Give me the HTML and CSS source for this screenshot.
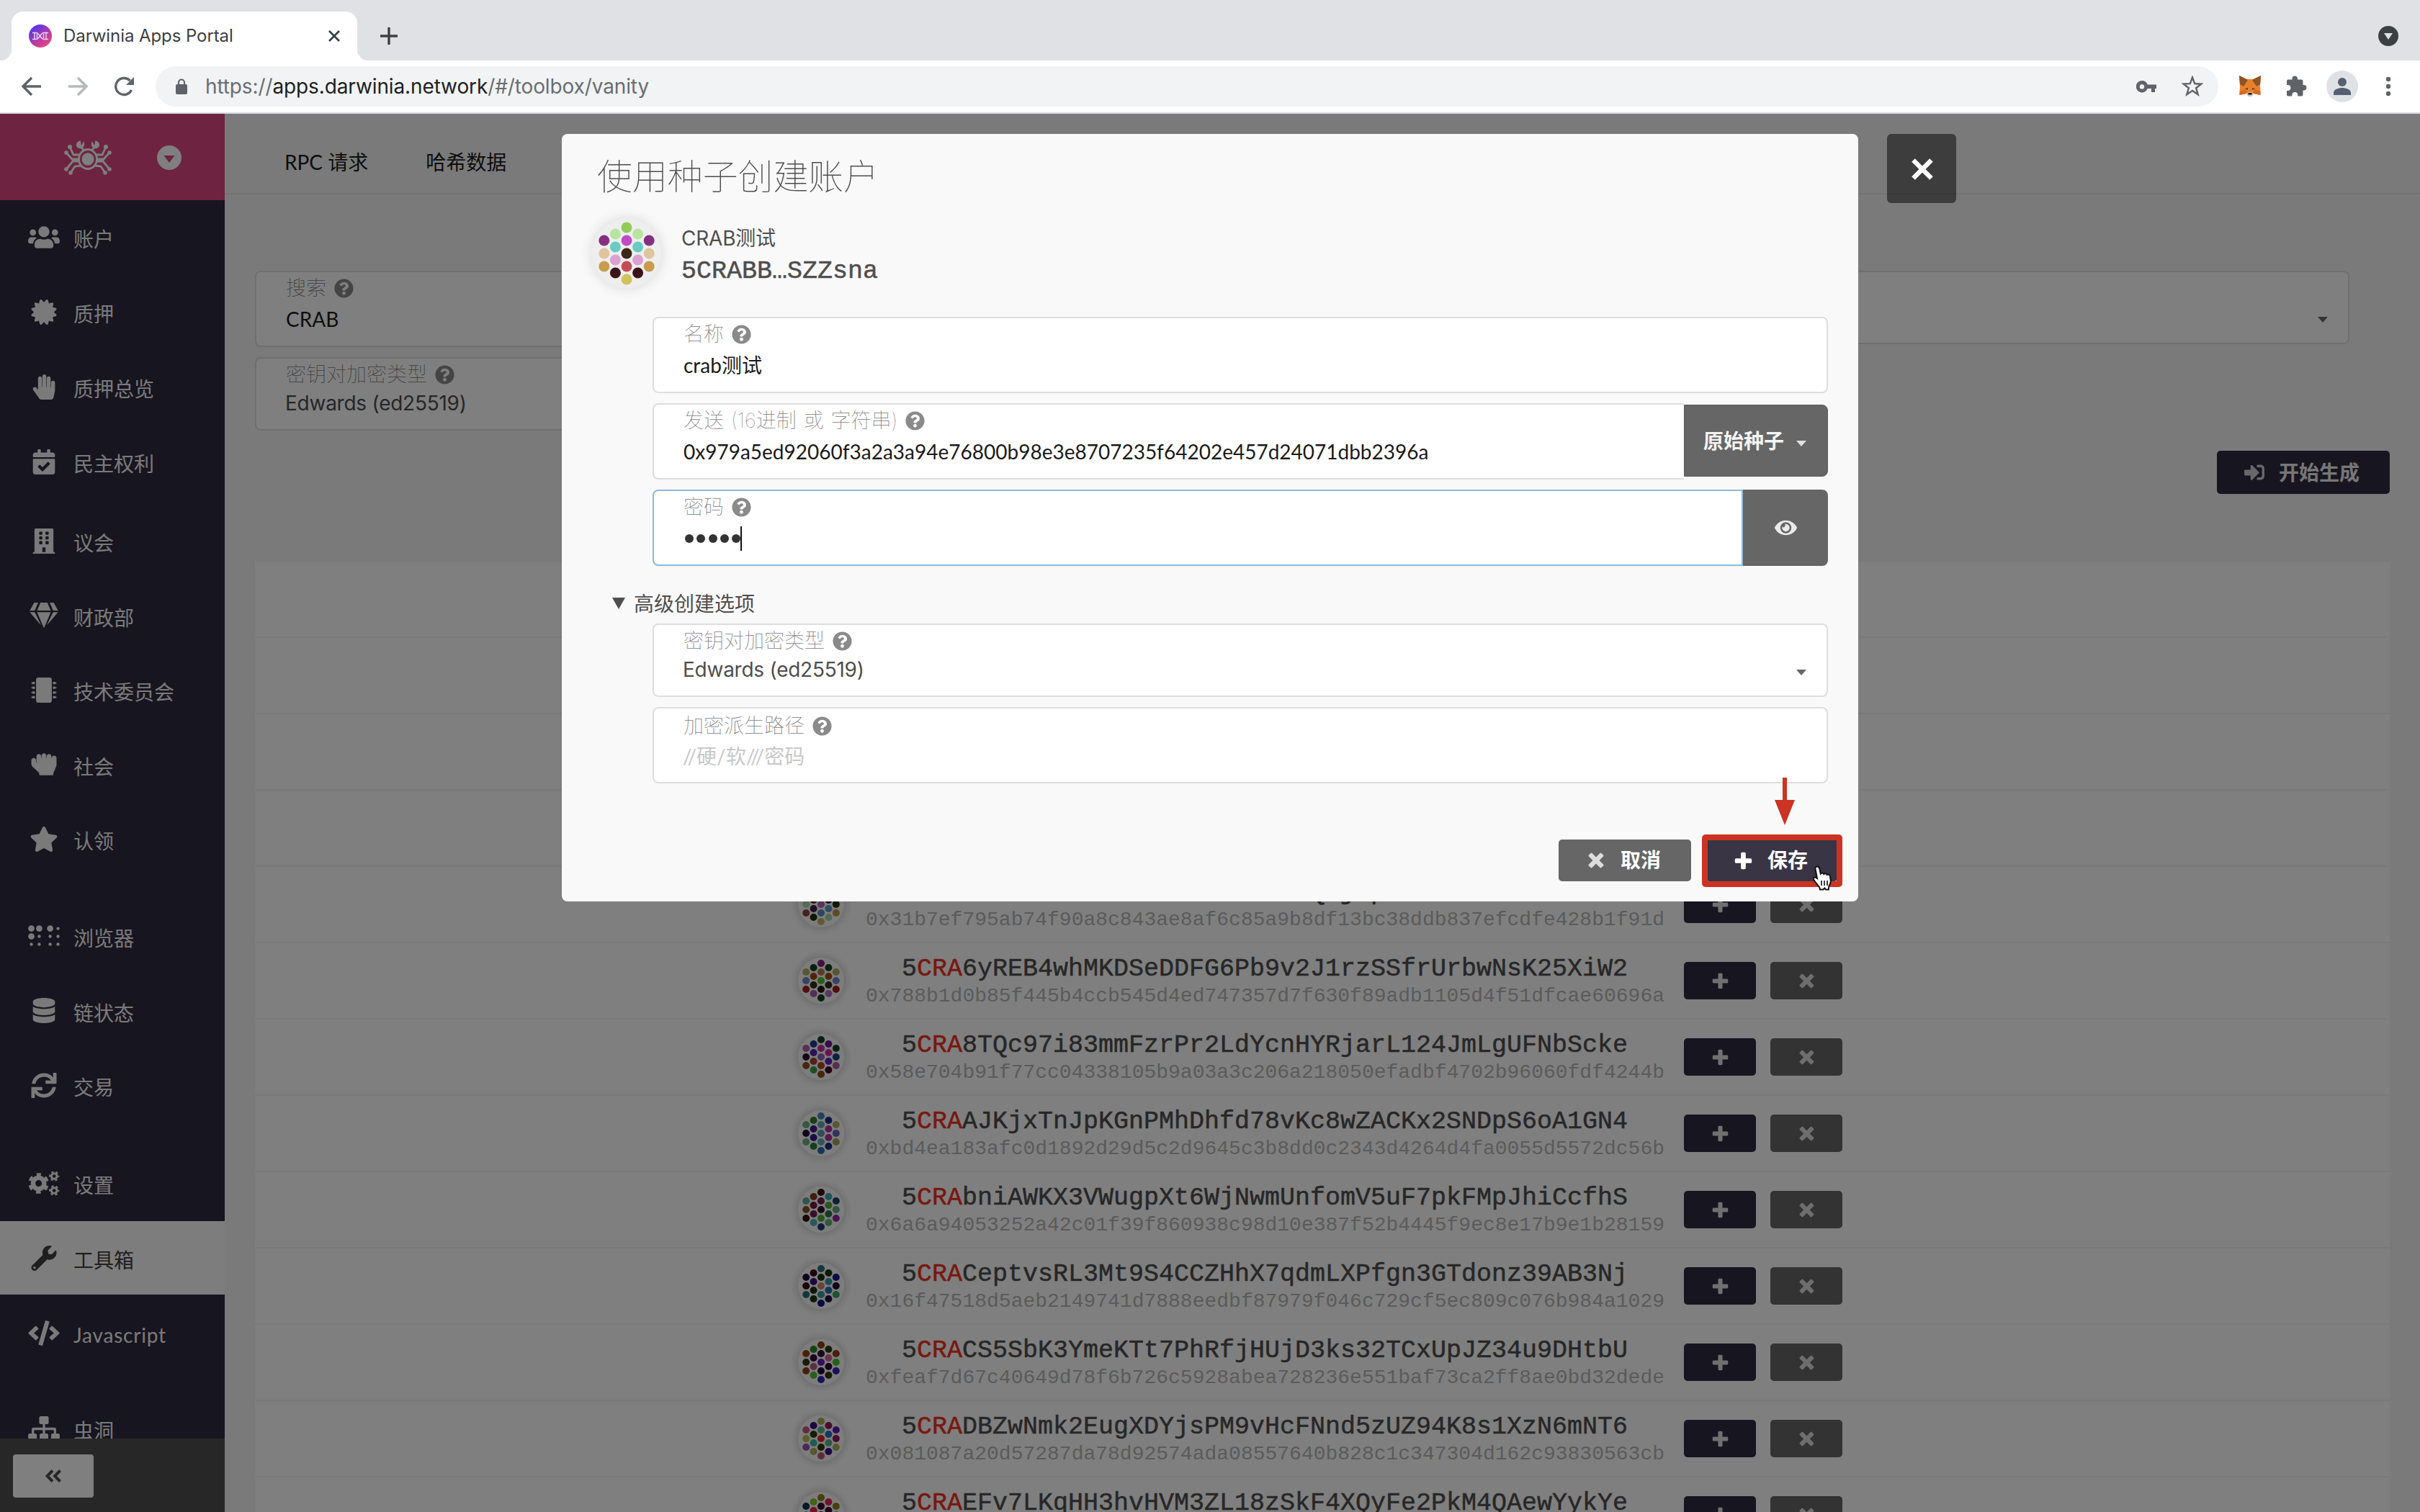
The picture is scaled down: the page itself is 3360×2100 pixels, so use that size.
FILE: index.html
```html
<!DOCTYPE html>
<html lang="zh-CN">
<head>
<meta charset="utf-8">
<title>Darwinia Apps Portal</title>
<link rel="stylesheet" href="styles.css">
</head>
<body>
<svg class="sprite" aria-hidden="true">
  <symbol id="i-users" viewBox="0 0 640 512"><path d="M96 224c35.300 0 64-28.700 64-64s-28.700-64-64-64-64 28.700-64 64 28.700 64 64 64zm448 0c35.300 0 64-28.700 64-64s-28.700-64-64-64-64 28.700-64 64 28.700 64 64 64zm32 32h-64c-17.600 0-33.500 7.100-45.100 18.600 40.300 22.100 68.900 62 75.100 109.400h66c17.700 0 32-14.300 32-32v-32c0-35.300-28.700-64-64-64zm-256 0c61.900 0 112-50.100 112-112S381.900 32 320 32 208 82.100 208 144s50.100 112 112 112zm76.800 32h-8.300c-20.800 10-43.900 16-68.500 16s-47.600-6-68.500-16h-8.300C179.600 288 128 339.600 128 403.200V432c0 26.500 21.500 48 48 48h288c26.500 0 48-21.500 48-48v-28.800c0-63.600-51.600-115.200-115.200-115.200zm-223.700-13.400C161.500 263.100 145.600 256 128 256H64c-35.300 0-64 28.700-64 64v32c0 17.700 14.300 32 32 32h65.900c6.300-47.400 34.900-87.300 75.200-109.400z"/></symbol>
  <symbol id="i-certificate" viewBox="0 0 512 512"><path d="M458.622 255.920l45.985-45.005c13.708-12.977 7.316-36.039-10.664-40.339l-62.650-15.990 17.661-62.015c4.991-17.838-11.829-34.663-29.661-29.671l-61.994 17.667-15.984-62.671C337.085.197 313.765-6.276 300.990 7.228L256 53.570 211.011 7.229c-12.630-13.351-36.047-7.234-40.325 10.668l-15.984 62.671-61.995-17.667C74.870 57.907 58.056 74.738 63.046 92.572l17.661 62.015-62.650 15.990C.069 174.878-6.310 197.944 7.392 210.915l45.985 45.005-45.985 45.004c-13.708 12.977-7.316 36.039 10.664 40.339l62.650 15.990-17.661 62.015c-4.991 17.838 11.829 34.663 29.661 29.671l61.994-17.667 15.984 62.671c4.439 18.575 27.696 24.018 40.325 10.668L256 458.610l44.989 46.001c12.500 13.488 35.987 7.486 40.325-10.668l15.984-62.671 61.994 17.667c17.836 4.994 34.651-11.837 29.661-29.671l-17.661-62.015 62.650-15.990c17.987-4.302 24.366-27.367 10.664-40.339l-45.984-45.004z"/></symbol>
  <symbol id="i-hand" viewBox="0 0 448 512"><path d="M408.781 128.007C386.356 127.578 368 146.360 368 168.790V256h-8V79.790c0-22.430-18.356-41.212-40.781-40.783C297.488 39.423 280 57.169 280 79v177h-8V40.790C272 18.360 253.644-.422 231.219.007 209.488.423 192 18.169 192 40v216h-8V80.790c0-22.430-18.356-41.212-40.781-40.783C121.488 40.423 104 58.169 104 80v235.992l-31.648-43.519c-12.993-17.866-38.009-21.817-55.877-8.823-17.865 12.994-21.815 38.010-8.822 55.877l125.601 172.705A48 48 0 0 0 172.073 512h197.590c22.274 0 41.622-15.324 46.724-37.006l26.508-112.660a192.011 192.011 0 0 0 5.104-43.975V168c.001-21.831-17.487-39.577-39.218-39.993z"/></symbol>
  <symbol id="i-calendar" viewBox="0 0 448 512"><path d="M436 160H12c-6.627 0-12-5.373-12-12v-36c0-26.510 21.490-48 48-48h48V12c0-6.627 5.373-12 12-12h40c6.627 0 12 5.373 12 12v52h128V12c0-6.627 5.373-12 12-12h40c6.627 0 12 5.373 12 12v52h48c26.510 0 48 21.490 48 48v36c0 6.627-5.373 12-12 12zM12 192h424c6.627 0 12 5.373 12 12v260c0 26.510-21.490 48-48 48H48c-26.510 0-48-21.490-48-48V204c0-6.627 5.373-12 12-12zm333.296 95.947l-28.169-28.398c-4.667-4.705-12.265-4.736-16.970-.068L194.120 364.665l-45.980-46.352c-4.667-4.705-12.266-4.736-16.971-.068l-28.397 28.170c-4.705 4.667-4.736 12.265-.068 16.970l82.601 83.269c4.667 4.705 12.265 4.736 16.970.068l142.953-141.805c4.705-4.667 4.736-12.265.068-16.970z"/></symbol>
  <symbol id="i-building" viewBox="0 0 448 512"><path d="M436 480h-20V24c0-13.255-10.745-24-24-24H56C42.745 0 32 10.745 32 24v456H12c-6.627 0-12 5.373-12 12v20h448v-20c0-6.627-5.373-12-12-12zM128 76c0-6.627 5.373-12 12-12h40c6.627 0 12 5.373 12 12v40c0 6.627-5.373 12-12 12h-40c-6.627 0-12-5.373-12-12V76zm0 96c0-6.627 5.373-12 12-12h40c6.627 0 12 5.373 12 12v40c0 6.627-5.373 12-12 12h-40c-6.627 0-12-5.373-12-12v-40zm52 148h-40c-6.627 0-12-5.373-12-12v-40c0-6.627 5.373-12 12-12h40c6.627 0 12 5.373 12 12v40c0 6.627-5.373 12-12 12zm76 160h-64v-84c0-6.627 5.373-12 12-12h40c6.627 0 12 5.373 12 12v84zm64-172c0 6.627-5.373 12-12 12h-40c-6.627 0-12-5.373-12-12v-40c0-6.627 5.373-12 12-12h40c6.627 0 12 5.373 12 12v40zm0-96c0 6.627-5.373 12-12 12h-40c-6.627 0-12-5.373-12-12v-40c0-6.627 5.373-12 12-12h40c6.627 0 12 5.373 12 12v40zm0-96c0 6.627-5.373 12-12 12h-40c-6.627 0-12-5.373-12-12V76c0-6.627 5.373-12 12-12h40c6.627 0 12 5.373 12 12v40z"/></symbol>
  <symbol id="i-gem" viewBox="0 0 576 512"><path d="M485.500 0L576 160H474.900L405.700 0h79.800zm-128 0l69.200 160H149.300L218.500 0h139zm-267 0h79.800l-69.200 160H0L90.500 0zM0 192h100.700l123 251.700c1.500 3.100-2.700 5.900-5 3.300L0 192zm148.200 0h279.600l-137 318.200c-1 2.400-4.500 2.400-5.500 0L148.200 192zm204.100 251.700l123-251.700H576L357.300 446.900c-2.300 2.700-6.500-.1-5-3.200z"/></symbol>
  <symbol id="i-chip" viewBox="0 0 512 512"><rect x="96" y="0" width="320" height="512" rx="48"/><path d="M440 88h42q6 0 6 6v6h18q6 0 6 6v12q0 6-6 6h-18v6q0 6-6 6h-42zm0 96h42q6 0 6 6v6h18q6 0 6 6v12q0 6-6 6h-18v6q0 6-6 6h-42zm0 96h42q6 0 6 6v6h18q6 0 6 6v12q0 6-6 6h-18v6q0 6-6 6h-42zm0 96h42q6 0 6 6v6h18q6 0 6 6v12q0 6-6 6h-18v6q0 6-6 6h-42zM72 88H30q-6 0-6 6v6H6q-6 0-6 6v12q0 6 6 6h18v6q0 6 6 6h42zm0 96H30q-6 0-6 6v6H6q-6 0-6 6v12q0 6 6 6h18v6q0 6 6 6h42zm0 96H30q-6 0-6 6v6H6q-6 0-6 6v12q0 6 6 6h18v6q0 6 6 6h42zm0 96H30q-6 0-6 6v6H6q-6 0-6 6v12q0 6 6 6h18v6q0 6 6 6h42z"/></symbol>
  <symbol id="i-fist" viewBox="0 0 512 512"><path d="M464.800 80c-26.900-.4-48.800 21.200-48.800 48h-8V96.800c0-26.300-20.900-48.300-47.200-48.800-26.900-.4-48.800 21.200-48.800 48v32h-8V80.800c0-26.300-20.900-48.300-47.200-48.800-26.900-.4-48.800 21.200-48.800 48v48h-8V96.800c0-26.300-20.900-48.300-47.200-48.800-26.900-.4-48.800 21.200-48.800 48v136l-8-7.100v-48.100c0-26.300-20.900-48.300-47.200-48.800C21.900 127.600 0 149.200 0 176v66.400c0 27.400 11.700 53.500 32.200 71.700l111.700 99.300c10.200 9.100 16.100 22.200 16.100 35.900v6.700c0 13.300 10.700 24 24 24h240c13.300 0 24-10.700 24-24v-2.900c0-12.800 2.600-25.500 7.500-37.300l49-116.300c5-11.800 7.500-24.500 7.500-37.300V128.800c0-26.300-20.900-48.400-47.200-48.800z"/></symbol>
  <symbol id="i-star" viewBox="0 0 576 512"><path d="M259.300 17.800L194 150.200 47.900 171.500c-26.200 3.800-36.700 36.100-17.700 54.600l105.700 103-25 145.500c-4.500 26.300 23.200 46 46.400 33.700L288 439.600l130.700 68.700c23.200 12.200 50.900-7.400 46.400-33.700l-25-145.500 105.700-103c19-18.500 8.500-50.800-17.700-54.600L382 150.200 316.700 17.800c-11.700-23.600-45.600-23.900-57.400 0z"/></symbol>
  <symbol id="i-braille" viewBox="0 0 640 512"><circle cx="64" cy="96" r="64"/><circle cx="224" cy="96" r="64"/><circle cx="446" cy="96" r="64"/><circle cx="606" cy="96" r="32"/><circle cx="64" cy="256" r="64"/><circle cx="224" cy="256" r="32"/><circle cx="446" cy="256" r="32"/><circle cx="606" cy="256" r="32"/><circle cx="64" cy="416" r="32"/><circle cx="224" cy="416" r="32"/><circle cx="446" cy="416" r="32"/><circle cx="606" cy="416" r="32"/></symbol>
  <symbol id="i-database" viewBox="0 0 448 512"><path d="M448 73.143v45.714C448 159.143 347.667 192 224 192S0 159.143 0 118.857V73.143C0 32.857 100.333 0 224 0s224 32.857 224 73.143zM448 176v102.857C448 319.143 347.667 352 224 352S0 319.143 0 278.857V176c48.125 33.143 136.208 48.572 224 48.572S399.874 209.143 448 176zm0 160v102.857C448 479.143 347.667 512 224 512S0 479.143 0 438.857V336c48.125 33.143 136.208 48.572 224 48.572S399.874 369.143 448 336z"/></symbol>
  <symbol id="i-sync" viewBox="0 0 512 512"><path d="M440.650 12.570l4 82.770A247.160 247.160 0 0 0 255.830 8C134.730 8 33.910 94.920 12.290 209.820A12 12 0 0 0 24.090 224h49.050a12 12 0 0 0 11.670-9.260 175.910 175.910 0 0 1 317-56.940l-101.460-4.860a12 12 0 0 0-12.570 12v47.410a12 12 0 0 0 12 12H500a12 12 0 0 0 12-12V12a12 12 0 0 0-12-12h-47.370a12 12 0 0 0-11.980 12.570zM255.830 432a175.610 175.610 0 0 1-146-77.800l101.800 4.870a12 12 0 0 0 12.570-12v-47.400a12 12 0 0 0-12-12H12a12 12 0 0 0-12 12V500a12 12 0 0 0 12 12h47.350a12 12 0 0 0 12-12.600l-4.150-82.570A247.170 247.170 0 0 0 255.830 504c121.110 0 221.930-86.920 243.550-201.820a12 12 0 0 0-11.800-14.180h-49.050a12 12 0 0 0-11.670 9.260A175.860 175.860 0 0 1 255.830 432z"/></symbol>
  <symbol id="i-cogs" viewBox="0 0 640 512"><g fill="none" stroke="currentColor"><circle cx="212" cy="256" r="113" stroke-width="94"/><circle cx="212" cy="256" r="182" stroke-width="56" stroke-dasharray="95.300 95.300" stroke-dashoffset="47.600" transform="rotate(-90 212 256)"/><circle cx="528" cy="110" r="56" stroke-width="44"/><circle cx="528" cy="110" r="90" stroke-width="30" stroke-dasharray="47.120 47.120" stroke-dashoffset="23.500"/><circle cx="528" cy="402" r="56" stroke-width="44"/><circle cx="528" cy="402" r="90" stroke-width="30" stroke-dasharray="47.120 47.120" stroke-dashoffset="23.500"/></g></symbol>
  <symbol id="i-wrench" viewBox="0 0 512 512"><path d="M507.730 109.100c-2.240-9.030-13.540-12.090-20.120-5.510l-74.360 74.360-67.880-11.310-11.310-67.880 74.360-74.360c6.620-6.620 3.430-17.900-5.660-20.160-47.380-11.740-99.550.910-136.580 37.930-39.640 39.640-50.550 97.100-34.050 147.200L18.740 402.760c-24.990 24.990-24.990 65.510 0 90.500 24.990 24.990 65.510 24.990 90.500 0l213.210-213.210c50.120 16.710 107.470 5.680 147.370-34.220 37.070-37.070 49.700-89.320 37.910-136.730zM64 472c-13.250 0-24-10.750-24-24 0-13.260 10.750-24 24-24s24 10.740 24 24c0 13.250-10.750 24-24 24z"/></symbol>
  <symbol id="i-code" viewBox="0 0 640 512"><path d="M278.900 511.500l-61-17.700c-6.400-1.800-10-8.500-8.200-14.900L346.200 8.700c1.800-6.400 8.500-10 14.900-8.200l61 17.700c6.400 1.800 10 8.500 8.200 14.900L293.800 503.300c-1.900 6.400-8.500 10.100-14.900 8.200zm-114-112.200l43.500-46.400c4.600-4.900 4.300-12.700-.8-17.200L117 256l90.600-79.700c5.100-4.500 5.500-12.300.8-17.200l-43.500-46.400c-4.500-4.800-12.100-5.100-17-.5L3.800 247.200c-5.100 4.700-5.100 12.800 0 17.500l144.100 135.100c4.900 4.600 12.500 4.400 17-.5zm327.200.6l144.100-135.100c5.100-4.700 5.100-12.800 0-17.500L492.100 112.100c-4.800-4.500-12.400-4.300-17 .5L431.600 159c-4.600 4.900-4.300 12.700.8 17.200L523 256l-90.600 79.700c-5.100 4.500-5.500 12.300-.8 17.200l43.500 46.400c4.500 4.900 12.100 5.100 17 .6z"/></symbol>
  <symbol id="i-sitemap" viewBox="0 0 640 512"><rect x="224" y="0" width="192" height="160" rx="30"/><rect x="0" y="352" width="176" height="160" rx="30"/><rect x="232" y="352" width="176" height="160" rx="30"/><rect x="464" y="352" width="176" height="160" rx="30"/><path d="M296 150h48v82h188q36 0 36 36v90h-48v-78H344v78h-48v-78H120v78H72v-90q0-36 36-36h188z"/></symbol>
  <symbol id="i-signin" viewBox="0 0 512 512"><path d="M416 448h-84c-6.600 0-12-5.400-12-12v-40c0-6.600 5.400-12 12-12h84c17.700 0 32-14.300 32-32V160c0-17.700-14.300-32-32-32h-84c-6.600 0-12-5.400-12-12V76c0-6.600 5.400-12 12-12h84c53 0 96 43 96 96v192c0 53-43 96-96 96zm-47-201L201 79c-15-15-41-4.500-41 17v96H24c-13.300 0-24 10.700-24 24v96c0 13.300 10.700 24 24 24h136v96c0 21.500 26 32 41 17l168-168c9.300-9.400 9.300-24.600 0-34z"/></symbol>
  <symbol id="i-help" viewBox="0 0 512 512"><path d="M504 256c0 136.997-111.043 248-248 248S8 392.997 8 256C8 119.083 119.043 8 256 8s248 111.083 248 248zM262.655 90c-54.497 0-89.255 22.957-116.549 63.758-3.536 5.286-2.353 12.415 2.715 16.258l34.699 26.310c5.205 3.947 12.621 3.008 16.665-2.122 17.864-22.658 30.113-35.797 57.303-35.797 20.429 0 45.698 13.148 45.698 32.958 0 14.976-12.363 22.667-32.534 33.976C247.128 238.528 216 254.941 216 296v4c0 6.627 5.373 12 12 12h56c6.627 0 12-5.373 12-12v-1.333c0-28.462 83.186-29.647 83.186-106.667 0-58.002-60.165-102-116.531-102zM256 338c-25.365 0-46 20.635-46 46 0 25.364 20.635 46 46 46s46-20.636 46-46c0-25.365-20.635-46-46-46z"/></symbol>
  <symbol id="i-eye" viewBox="0 0 576 512"><path d="M572.520 241.400C518.290 135.590 410.930 64 288 64S57.680 135.640 3.480 241.410a32.350 32.350 0 0 0 0 29.190C57.710 376.410 165.070 448 288 448s230.320-71.640 284.520-177.410a32.350 32.350 0 0 0 0-29.190zM288 400a144 144 0 1 1 144-144 143.930 143.930 0 0 1-144 144zm0-240a95.310 95.310 0 0 0-25.310 3.790 47.850 47.850 0 0 1-66.900 66.900A95.780 95.780 0 1 0 288 160z"/></symbol>
  <symbol id="i-plus" viewBox="0 0 24 24"><path d="M8.800 2.300Q8.800.8 10.300.8h3.400q1.500 0 1.500 1.500v6.500h6.500q1.500 0 1.500 1.500v3.400q0 1.500-1.500 1.500h-6.500v6.500q0 1.500-1.500 1.500h-3.400q-1.500 0-1.500-1.500v-6.500H2.300q-1.500 0-1.500-1.500v-3.400q0-1.500 1.500-1.500h6.500z"/></symbol>
  <symbol id="i-times" viewBox="0 0 24 24"><path transform="rotate(45 12 12)" d="M8.500.500Q8.500-1.500 10-1.500h4q1.500 0 1.500 2v8h8q2 0 2 1.500v4q0 1.500-2 1.500h-8v8q0 2-1.500 2h-4q-1.500 0-1.500-2v-8h-8q-2 0-2-1.500v-4q0-1.500 2-1.500h8z"/></symbol>
</svg>

<div class="browser">
  <header class="tabstrip">
    <div class="tab">
      <svg class="favicon" viewBox="0 0 32 32"><defs><linearGradient id="fav" x1="0.200" y1="0.100" x2="0.800" y2="0.900"><stop offset="0" stop-color="#5a35ea"/><stop offset="1" stop-color="#ee4377"/></linearGradient></defs><circle cx="16" cy="16" r="16" fill="url(#fav)"/><path d="M5 11.500h5c5 0 6 9 11 9h6M5 20.500h5c5 0 6-9 11-9h6M8 11.500v9M11.500 13v6M20.500 13v6M24 11.500v9" fill="none" stroke="#e9d5f5" stroke-width="1.400"/></svg>
      <span class="tab-title">Darwinia Apps Portal</span>
      <svg class="tab-close" viewBox="0 0 16 16"><path d="M1 1l14 14M15 1L1 15"/></svg>
    </div>
    <svg class="new-tab" viewBox="0 0 24 24"><path d="M12 0v24M0 12h24"/></svg>
    <svg class="tab-search" viewBox="0 0 28 28"><circle cx="14" cy="14" r="14" fill="#3c4043"/><path d="M8 10h12l-6 9z" fill="#dfe1e5"/></svg>
  </header>
  <div class="toolbar">
    <svg class="nav-btn" viewBox="0 0 28 28"><path d="M27 14H3M14 2L2 14l12 12"/></svg>
    <svg class="nav-btn nav-off" viewBox="0 0 28 28"><path d="M1 14h24M14 2l12 12-12 12"/></svg>
    <svg class="nav-btn" viewBox="0 0 28 28"><path d="M24.500 19A11.500 11.500 0 1 1 22.500 6"/><path class="solid" d="M28 1v11H17z"/></svg>
    <div class="omnibox">
      <svg class="lock" viewBox="0 0 16 22"><rect y="8" width="16" height="14" rx="2" fill="#5f6368"/><path d="M4 9V5.500a4 4 0 0 1 8 0V9" fill="none" stroke="#5f6368" stroke-width="2.200"/></svg>
      <span class="url">https://<b>apps.darwinia.network</b>/#/toolbox/vanity</span>
      <svg class="key" viewBox="0 0 28 17"><path fill="#5f6368" fill-rule="evenodd" d="M8 0a8.200 8.200 0 0 1 7.700 5.500H28V11h-2v5h-5v-5h-5.300A8.200 8.200 0 1 1 8 0zm0 5.200a3.200 3.200 0 1 0 0 6.400 3.200 3.200 0 0 0 0-6.400z"/></svg>
      <svg class="bookmark" viewBox="0 0 30 30"><path d="M15 2.500l3.200 8.700 9.200.3-7.300 5.700 2.600 9-7.700-5.200-7.700 5.200 2.600-9L2.600 11.500l9.200-.3z" fill="none" stroke="#5f6368" stroke-width="2.400"/></svg>
    </div>
    <div class="extensions">
      <svg width="32" height="30" viewBox="0 0 32 30"><path fill="#e8822a" d="M1 0l11 5h8l11-5-1 15 1 12-10-2-3 4h-4l-3-4-10 2 1-12z"/><path fill="#8e5326" d="M1 0l12 6-6 9-5-3zM31 0L19 6l6 9 5-3z"/><path fill="#d5682a" d="M2 22l8-3 1 6-9 2zM30 22l-8-3-1 6 9 2z"/><path fill="#d8c3b4" d="M11 25l3-2h4l3 2-3 4h-4z"/><path fill="#111" d="M13.500 24h5v2.500h-5z"/><path fill="#513c32" d="M9 18l4-1v3zM23 18l-4-1v3z"/></svg>
      <svg width="30" height="30" viewBox="0 0 30 30"><path fill="#5f6368" d="M2 7.500Q2 5.500 4 5.500h5.500V4.200a3.700 3.700 0 0 1 7.400 0v1.300h5.600q2 0 2 2V13h1.200a3.700 3.700 0 0 1 0 7.400h-1.200v6.100q0 2-2 2h-5.300V27a3.900 3.900 0 0 0-7.800 0v1.500H4q-2 0-2-2v-5.600h1.500a3.900 3.900 0 0 0 0-7.800H2z"/></svg>
      <svg width="44" height="44" viewBox="0 0 44 44"><circle cx="22" cy="22" r="22" fill="#dfe1e5"/><circle cx="22" cy="16" r="6" fill="#556070"/><path d="M10 34v-3c0-5 7-7 12-7s12 2 12 7v3z" fill="#556070"/></svg>
      <svg width="30" height="30" viewBox="0 0 30 30"><g fill="#5f6368"><circle cx="15" cy="5" r="3.200"/><circle cx="15" cy="15" r="3.200"/><circle cx="15" cy="25" r="3.200"/></g></svg>
    </div>
  </div>

  <div class="app">
    <aside class="sidebar">
      <div class="brand">
        <svg class="crab" viewBox="0 0 66 48"><g fill="none" stroke="#fff" stroke-width="2.800"><ellipse cx="33" cy="26" rx="12.500" ry="13.500"/><path d="M22 20h-9L8 9M21 26H11L3 17M22 29H12L3 40M24 35l-9 1-6 9M44 20h9l5-11M45 26h10l8-9M44 29h10l9 11M42 35l9 1 6 9M28 14l-4-4M38 14l4-4"/></g><g fill="#fff"><ellipse cx="33" cy="26" rx="8.500" ry="8.800"/><path d="M22.500 0c-6 2-8 8-2 11 6 1 9-3 7-10l-3.500 6zM43.500 0c6 2 8 8 2 11-6 1-9-3-7-10l3.500 6z"/><circle cx="8" cy="9" r="3"/><circle cx="3" cy="17" r="2.800"/><circle cx="3" cy="40" r="2.800"/><circle cx="9" cy="45" r="2.800"/><circle cx="58" cy="9" r="3"/><circle cx="63" cy="17" r="2.800"/><circle cx="63" cy="40" r="2.800"/><circle cx="57" cy="45" r="2.800"/></g></svg>
        <svg class="brand-caret" viewBox="0 0 34 34"><circle cx="17" cy="17" r="17" fill="#fff"/><path d="M9.500 14h15L17 24z" fill="#dc4880"/></svg>
      </div>
      <nav class="menu">
        <ul class="group">
          <li><svg><use href="#i-users"/></svg><span>账户</span></li>
          <li><svg><use href="#i-certificate"/></svg><span>质押</span></li>
          <li><svg><use href="#i-hand"/></svg><span>质押总览</span></li>
          <li><svg><use href="#i-calendar"/></svg><span>民主权利</span></li>
        </ul>
        <ul class="group group-council">
          <li><svg><use href="#i-building"/></svg><span>议会</span></li>
          <li><svg><use href="#i-gem"/></svg><span>财政部</span></li>
          <li><svg><use href="#i-chip"/></svg><span>技术委员会</span></li>
          <li><svg><use href="#i-fist"/></svg><span>社会</span></li>
          <li><svg><use href="#i-star"/></svg><span>认领</span></li>
        </ul>
        <ul class="group group-chain">
          <li><svg><use href="#i-braille"/></svg><span>浏览器</span></li>
          <li><svg><use href="#i-database"/></svg><span>链状态</span></li>
          <li><svg><use href="#i-sync"/></svg><span>交易</span></li>
        </ul>
        <ul class="group group-tools">
          <li><svg><use href="#i-cogs"/></svg><span>设置</span></li>
          <li class="active"><svg><use href="#i-wrench"/></svg><span>工具箱</span></li>
          <li><svg><use href="#i-code"/></svg><span class="latin">Javascript</span></li>
        </ul>
        <ul class="group group-last">
          <li><svg><use href="#i-sitemap"/></svg><span>虫洞</span></li>
        </ul>
      </nav>
      <div class="collapse-bar">
        <button class="collapse"><svg viewBox="0 0 22 18"><path d="M10 1.500L2.500 9l7.500 7.500M20.500 1.500L13 9l7.500 7.500"/></svg></button>
      </div>
    </aside>

    <main class="main">
      <div class="tabs"><span>RPC 请求</span><span>哈希数据</span></div>
      <div class="filters">
        <div class="field"><div class="label">搜索<svg><use href="#i-help"/></svg></div><div class="value">CRAB</div></div>
        <div class="field select"><i class="caret"></i></div>
        <div class="field select"><div class="label">密钥对加密类型<svg><use href="#i-help"/></svg></div><div class="value">Edwards (ed25519)</div></div>
      </div>
      <div class="actions"><button class="btn start"><svg><use href="#i-signin"/></svg>开始生成</button></div>
      <div class="results" id="results"></div>
    </main>

    <div class="dimmer">
      <section class="modal">
        <h1>使用种子创建账户</h1>
        <div class="account">
          <div class="avatar" id="account-avatar"></div>
          <div class="account-text"><div class="account-name">CRAB测试</div><div class="account-address">5CRABB…SZZsna</div></div>
        </div>
        <div class="form">
          <div class="field"><div class="label">名称<svg><use href="#i-help"/></svg></div><div class="value">crab测试</div></div>
          <div class="combo">
            <div class="field open"><div class="label seed-label">发送 (16进制 或 字符串)<svg><use href="#i-help"/></svg></div><div class="value">0x979a5ed92060f3a2a3a94e76800b98e3e8707235f64202e457d24071dbb2396a</div></div>
            <button class="seed-type">原始种子<i class="caret"></i></button>
          </div>
          <div class="combo">
            <div class="field focused"><div class="label">密码<svg><use href="#i-help"/></svg></div><div class="value password"><i></i><i></i><i></i><i></i><i></i><em></em></div></div>
            <button class="reveal"><svg><use href="#i-eye"/></svg></button>
          </div>
        </div>
        <div class="summary"><i></i>高级创建选项</div>
        <div class="form advanced">
          <div class="field select"><div class="label">密钥对加密类型<svg><use href="#i-help"/></svg></div><div class="value">Edwards (ed25519)</div><i class="caret"></i></div>
          <div class="field path"><div class="label">加密派生路径<svg><use href="#i-help"/></svg></div><div class="value placeholder">//硬/软///密码</div></div>
        </div>
        <div class="modal-actions">
          <button class="btn cancel"><svg><use href="#i-times"/></svg><span>取消</span></button>
          <button class="btn save"><svg><use href="#i-plus"/></svg><span>保存</span><i class="highlight"></i></button>
        </div>
        <svg class="arrow" viewBox="0 0 28 66"><path d="M11 0h6v31h11L14 66 0 31h11z" fill="#cc3322"/></svg>
        <svg class="pointer" viewBox="0 0 32 36"><path d="M8 1.500c2 0 3 1 3.300 3l1.500 7c1-1.500 4-1.200 4.500.5 1-1.200 4-.8 4.400 1 1.300-1 4 0 4.300 2l.8 6c.3 4-1.500 6-2.500 8l-.5 4.500h-4l-1.500-2-2 2H12l-1-3.500c-2-2.500-5-6-7-9-2-2-1-5 1.500-4.500L8 18 5.500 5C5.200 3 6 1.500 8 1.500z" fill="#fff" stroke="#111" stroke-width="2"/><path d="M14 21v7M18 21v7M22 21v7" stroke="#111" stroke-width="1.600"/></svg>
      </section>
      <button class="modal-close"><svg viewBox="0 0 32 32"><path d="M3.500 3.500l25 25M28.500 3.500l-25 25"/></svg></button>
    </div>
  </div>
</div>
<script src="app.js"></script>
</body>
</html>
```
FILE: styles.css
```css
* { box-sizing: border-box; }
body, ul, h1 { margin: 0; padding: 0; }
body {
  width: 3360px; height: 2100px; overflow: hidden;
  font: 28px/34px Lato, "Noto Sans CJK SC", sans-serif;
  color: #4e4e4e;
}
button { border: 0; padding: 0; font: inherit; color: inherit; }
svg { display: block; fill: currentColor; flex: none; }
.sprite { position: absolute; width: 0; height: 0; }
.browser { display: flex; flex-direction: column; height: 2100px; }

/* browser frame */
.tabstrip { display: flex; align-items: center; height: 84px; padding: 16px 30px 0 16px; background: #dfe1e5; color: #3c4043; flex: none; }
.tab { position: relative; display: flex; align-items: center; width: 480px; height: 68px; padding: 0 24px; background: #fff; border-radius: 16px 16px 0 0; }
.tab::before, .tab::after { content: ""; position: absolute; bottom: 0; width: 16px; height: 16px; }
.tab::before { left: -16px; background: radial-gradient(circle at 0 0, #dfe1e5 16px, #fff 16.500px); }
.tab::after { right: -16px; background: radial-gradient(circle at 100% 0, #dfe1e5 16px, #fff 16.500px); }
.favicon { width: 32px; height: 32px; }
.tab-title { flex: 1; margin-left: 16px; font: 24px/30px Inter, sans-serif; letter-spacing: -0.080px; }
.tab-close { width: 16px; height: 16px; fill: none; stroke: #3c4043; stroke-width: 2.800; }
.new-tab { width: 24px; height: 24px; margin-left: 32px; fill: none; stroke: #3c4043; stroke-width: 3.400; }
.tab-search { width: 28px; height: 28px; margin-left: auto; }
.toolbar { display: flex; align-items: center; height: 74px; padding: 0 22px 0 30px; background: #fff; border-bottom: 2px solid #dadce0; flex: none; }
.nav-btn { width: 28px; height: 28px; margin-right: 36px; fill: none; stroke: #5f6368; stroke-width: 3.400; }
.nav-btn .solid { fill: #5f6368; stroke: none; }
.nav-off { opacity: .45; }
.nav-btn:nth-of-type(3) { margin-right: 30px; }
.omnibox { display: flex; align-items: center; width: 2864px; height: 56px; padding: 0 21px 0 28px; border-radius: 28px; background: #f1f3f4; }
.lock { width: 16px; height: 22px; }
.url { flex: 1; margin-left: 25px; font: 28px/34px Inter, sans-serif; letter-spacing: -0.120px; color: #6a6d71; }
.url b { font-weight: 400; color: #202124; }
.key { width: 28px; height: 17px; margin-right: 35px; }
.bookmark { width: 30px; height: 30px; }
.extensions { display: grid; grid-template-columns: repeat(4, 44px); gap: 20px; place-items: center; margin-left: 22px; }

/* application */
.app { position: relative; display: flex; flex: 1; min-height: 0; background: #f5f5f5; }
.sidebar { display: flex; flex-direction: column; width: 312px; flex: none; background: #2f2b3f; }
.brand { display: flex; align-items: center; gap: 63px; height: 120px; padding: 1px 0 0 89px; background: #dc4880; flex: none; }
.crab { width: 66px; height: 48px; }
.brand-caret { width: 34px; height: 34px; }
.menu { flex: 1; min-height: 0; overflow: hidden; color: #f5f5f5; }
.group { display: flex; flex-direction: column; gap: 2px; list-style: none; }
.group-council { gap: 1.500px; margin-top: 8px; }
.group-chain { gap: 1.500px; margin-top: 33px; }
.group-tools { margin-top: 34px; }
.group-last { margin-top: 31px; }
.group li { display: flex; align-items: center; height: 102px; padding-left: 39px; flex: none; }
.group svg { width: 44px; height: 35px; }
.group span { margin: 6px 0 0 19px; }
.group .latin { letter-spacing: .800px; margin-top: 5px; }
.group .active { background: #fbfbfb; color: #3e3e3e; }
.collapse-bar { height: 102px; padding: 22px 18px; background: #4e4e4e; flex: none; }
.collapse { display: flex; align-items: center; justify-content: center; width: 112px; height: 60px; border-radius: 4px; background: #fff; }
.collapse svg { width: 22px; height: 18px; fill: none; stroke: #4e4e4e; stroke-width: 4; }

.main { flex: 1; padding-left: 42px; overflow: hidden; }
.tabs { display: flex; gap: 80px; height: 112px; margin-left: -42px; padding: 50px 0 0 83px; border-bottom: 2px solid #e6e6e6; color: #1a1a1a; }
.filters { display: grid; grid-template-columns: 1447px 1447px; gap: 14px; align-items: start; margin-top: 106px; }
.actions { display: flex; justify-content: flex-end; height: 60px; margin: 28px 42px 94px 0; }
.btn { position: relative; display: flex; align-items: center; border-radius: 5px; font-weight: 700; color: #fff; }
.start { width: 240px; padding-left: 38px; gap: 20px; background: #2f2b3f; color: #eee; }
.start svg { width: 28px; height: 28px; opacity: .85; }

.field { position: relative; width: 100%; height: 106px; padding: 8px 0 0 40px; background: #fff; border: 2px solid #dededf; border-radius: 8px; }
.select { height: 102px; }
.label { display: flex; align-items: center; height: 28px; padding-left: 1px; font: 100 28px/28px Inter, "Noto Sans CJK SC", sans-serif; color: #808080; }
.label svg { width: 27px; height: 27px; margin-left: 11px; color: #8a8a8a; }
.seed-label { word-spacing: 2px; }
.value { margin-top: 12px; height: 34px; color: #1a1a1a; white-space: nowrap; padding-left: 1px; }
.select .value { margin-top: 9px; padding-left: 0; font-family: Inter, sans-serif; letter-spacing: -0.250px; color: #4e4e4e; }
.caret { display: block; width: 14px; height: 8px; background: currentColor; clip-path: polygon(0 0, 100% 0, 50% 100%); }
.field .caret { position: absolute; right: 28px; bottom: 28px; color: #666; }

.results { width: 2964px; background: #fff; }
.row { display: flex; align-items: center; height: 106px; padding-left: 754px; border-bottom: 2px solid #f2f2f2; }
.avatar { flex: none; border-radius: 50%; background: #eee; }
.row .avatar { width: 64px; height: 64px; box-shadow: 0 0 10px 4px #dcdcdc; background: #fafafa; }
.keys { width: 1108px; margin: 4px 28px 0 30px; font-family: "Liberation Mono", monospace; text-align: center; white-space: nowrap; }
.address { font-size: 35px; line-height: 39px; -webkit-text-stroke: .500px currentColor; }
.address b { font-weight: 400; color: #f03020; }
.hex { font-size: 28px; line-height: 36px; color: #b6b6b6; }
.mini { display: flex; align-items: center; justify-content: center; width: 100px; height: 52px; margin-right: 20px; border-radius: 5px; background: #2f2b3f; color: #e0e0e0; }
.mini svg { width: 23px; height: 23px; }
.mini.remove { background: #666; color: #ddd; }
.mini.remove svg { width: 21px; height: 21px; }

/* dialog */
.dimmer { position: absolute; inset: 0; display: flex; align-items: flex-start; gap: 40px; padding: 28px 0 0 780px; background: rgba(0, 0, 0, .5); }
.modal { position: relative; width: 1800px; height: 1066px; padding: 26px 28px 0 42px; background: #f9f9f9; border-radius: 8px; }
.modal h1 { height: 60px; padding-left: 7px; font: 100 48.900px/60px "Noto Sans CJK SC", sans-serif; }
.account { display: flex; align-items: center; gap: 28px; height: 96px; margin-top: 32px; }
.account-text { padding-top: 4px; }
.modal .avatar { width: 96px; height: 96px; box-shadow: 0 0 14px 4px #e3e3e3; }
.account-name { font: 28px/46px Inter, "Noto Sans CJK SC", sans-serif; letter-spacing: -0.200px; }
.account-address { font: 35px/46px "Liberation Mono", monospace; -webkit-text-stroke: .500px currentColor; }
.form { display: flex; flex-direction: column; gap: 14px; margin: 40px 14px 0 84px; }
.combo { display: flex; }
.combo .field { flex: 1; }
.field.open { border-right: 0; border-radius: 8px 0 0 8px; }
.field.focused { border-color: #8fb9d8; border-radius: 8px 0 0 8px; }
.field.path { padding-top: 10px; }
.path .value { margin-top: 11px; padding-left: 0; }
.seed-type { display: flex; align-items: center; justify-content: space-between; width: 200px; height: 100px; margin-top: 2px; padding: 0 29px 0 26px; border-radius: 0 8px 8px 0; border: 1px solid #5c5c5c; background: #666; color: #f4f4f4; font-weight: 700; }
.seed-type .caret { margin-top: 8px; color: #e0e0e0; }
.reveal { display: flex; align-items: center; justify-content: center; width: 118px; height: 106px; border-radius: 0 8px 8px 0; background: #666; color: #eaeaea; }
.reveal svg { width: 31px; height: 28px; }
.password { display: flex; align-items: center; gap: 4.300px; padding: 2px 0 0 3px; }
.password i { width: 12px; height: 12px; border-radius: 50%; background: #333; }
.password em { width: 2px; height: 34px; margin-left: -4px; background: #111; }
.summary { display: flex; align-items: center; gap: 12px; height: 40px; margin: 32px 0 0 28px; }
.summary i { width: 18px; height: 16px; background: #4e4e4e; clip-path: polygon(0 0, 100% 0, 50% 100%); }
.advanced { margin-top: 8px; }
.value.placeholder { color: #c8c8c8; }
.modal-actions { display: flex; justify-content: flex-end; gap: 20px; margin-top: 78px; }
.modal-actions .btn { width: 184px; height: 58px; }
.modal-actions span { margin-top: -3px; }
.modal-actions .cancel { padding-left: 41px; gap: 23px; background: #666; }
.cancel svg { width: 22px; height: 22px; color: #ddd; }
.modal-actions .save { padding-left: 40px; gap: 21px; background: #393545; }
.save svg { width: 25px; height: 25px; }
.highlight { position: absolute; inset: -7px -6px -8px -5px; border: 8px solid #cc3322; border-radius: 5px; }
.arrow { position: absolute; left: 1684px; top: 894px; width: 28px; height: 66px; }
.pointer { position: absolute; left: 1735px; top: 1016px; width: 32px; height: 36px; }
.modal-close { display: flex; align-items: center; justify-content: center; width: 96px; height: 96px; border-radius: 6px; background: rgba(0, 0, 0, .5); }
.modal-close svg { width: 32px; height: 32px; margin-left: 2px; margin-top: 2px; fill: none; stroke: #fff; stroke-width: 6.500; }
```
FILE: app.js
```js
// Dot positions on a 64-unit icon: centre column, inner columns, outer columns.
const DOTS = [
  [32, 8], [32, 20], [32, 32], [32, 44], [32, 56],
  [21.6, 14], [21.6, 26], [21.6, 38], [21.6, 50],
  [42.4, 14], [42.4, 26], [42.4, 38], [42.4, 50],
  [11.2, 20], [11.2, 32], [11.2, 44],
  [52.8, 20], [52.8, 32], [52.8, 44]
];

function identicon(colors) {
  const list = colors.split(' ');
  const dots = DOTS.map(([x, y], i) => `<circle cx="${x}" cy="${y}" r="5" fill="#${list[i]}"/>`);
  return `<svg viewBox="0 0 64 64">${dots.join('')}</svg>`;
}

const ROWS = [
  null, null, null, null,
  ['3nVtYw8Fb2KsMeXh4ZrDuAcQWjRpN5oLkHvTmEx9BdUz', '31b7ef795ab74f90a8c843ae8af6c85a9b8df13bc38ddb837efcdfe428b1f91d',
    '80a030 702050 b864bc 5a90c0 c8ae68 1c3c88 5a3018 3c2048 223010 1c3c88 301830 6098c4 a4d4a8 904040 a0dca8 904040 b89848 283010 b89848'],
  ['6yREB4whMKDSeDDFG6Pb9v2J1rzSSfrUrbwNsK25XiW2', '788b1d0b85f445b4ccb545d4ed747357d7f630f89adb1105d4f51dfcae60696a',
    '8c1c78 b87850 50c030 281808 103c20 104020 a04c14 303010 a060b0 104020 a04c14 303010 b070c0 b0ac60 6c84c0 a01c14 b0ac60 6c84c0 a01c14'],
  ['8TQc97i83mmFzrPr2LdYcnHYRjarL124JmLgUFNbScke', '58e704b91f77cc04338105b9a03a3c206a218050efadbf4702b96060fdf4244b',
    '104020 c030a0 9c60b8 b04420 904c1c 1c3c88 5424b0 a04420 38a048 681c98 d03090 5c24c8 400830 b060a0 300830 904c1c 104020 1c3c88 b060a0'],
  ['AJKjxTnJpKGnPMhDhfd78vKc8wZACKx2SNDpS6oA1GN4', 'bd4ea183afc0d1892d29d5c2d9645c3b8dd0c2343d4264d4fa0055d5572dc56b',
    '4088b8 60a8b8 609cb8 60b0b8 2c70b0 2c8030 3c1888 3c1888 2c8030 182c80 b030a0 b030a0 182c80 68b080 200838 68b080 b0ac68 6464b8 a4a05c'],
  ['bniAWKX3VWugpXt6WjNwmUnfomV5uF7pkFMpJhiCcfhS', '6a6a94053252a42c01f39f860938c98d10e387f52b4445f9ec8e17b9e1b28159',
    '380c08 702050 381030 50b040 203c70 803c1c 701c38 702050 50b0b0 40a8a8 50b040 287848 60b078 60a890 885024 380c08 203c70 60a880 9028a0'],
  ['CeptvsRL3Mt9S4CCZHhX7qdmLXPfgn3GTdonz39AB3Nj', '16f47518d5aeb2149741d7888eedbf87979f046c729cf5ec809c076b984a1029',
    '287078 183408 d08868 3898a0 081880 380818 400c80 183408 183408 183408 3898a0 2870b0 200838 200838 380810 287078 081880 200838 38a868'],
  ['CS5SbK3YmeKTt7PhRfjHUjD3ks32TCxUpJZ34u9DHtbU', 'feaf7d67c40649d78f6b726c5928abea728236e551baf73ca2ff8ae0bd32dede',
    '8c4010 380838 6020b8 280838 3420b8 2c8830 380838 b86088 50c030 303808 d06898 280838 303808 904010 303808 904010 904010 50c030 3420b8'],
  ['DBZwNmk2EugXDYjsPM9vHcFNnd5zUZ94K8s1XzN6mNT6', '081087a20d57287da78d92574ada08557640b828c1c347304d162c93830563cb',
    'a8b060 60b088 e02828 303808 b85878 3c0c88 303808 38b8a8 a8b060 901858 2070c8 60b088 3c0c88 c05c84 b8c050 9850b0 6018c0 901858 a8b060'],
  ['EFv7LKqHH3hvHVM3ZL18zSkF4XQyFe2PkM4QAewYykYe', '5b0c2f8f92a1c4e07d3368b1ce5f9d24a7760e13b8c94f52d06ea1873cf9254e',
    '908018 400830 400830 400830 908018 80c830 e02848 e02848 400830 e82060 400830 400830 e02848 083048 58b0c0 083048 908018 58b0c0 083048']
];

document.getElementById('results').innerHTML = ROWS.map(row => row
  ? `<div class="row"><div class="avatar">${identicon(row[2])}</div>
      <div class="keys"><div class="address">5<b>CRA</b>${row[0]}</div><div class="hex">0x${row[1]}</div></div>
      <button class="mini"><svg><use href="#i-plus"/></svg></button>
      <button class="mini remove"><svg><use href="#i-times"/></svg></button></div>`
  : '<div class="row"></div>').join('');

document.getElementById('account-avatar').innerHTML = identicon(
  '8fcc55 bf4cc4 3b2715 c44c57 cfc35c b8e4a0 68ccc2 dc9fd2 3b141a b8e4a0 68ccc2 dc9fd2 3b141a 85307f e0c4a0 c89c4c 85307f e0c4a0 c89c4c');
```
